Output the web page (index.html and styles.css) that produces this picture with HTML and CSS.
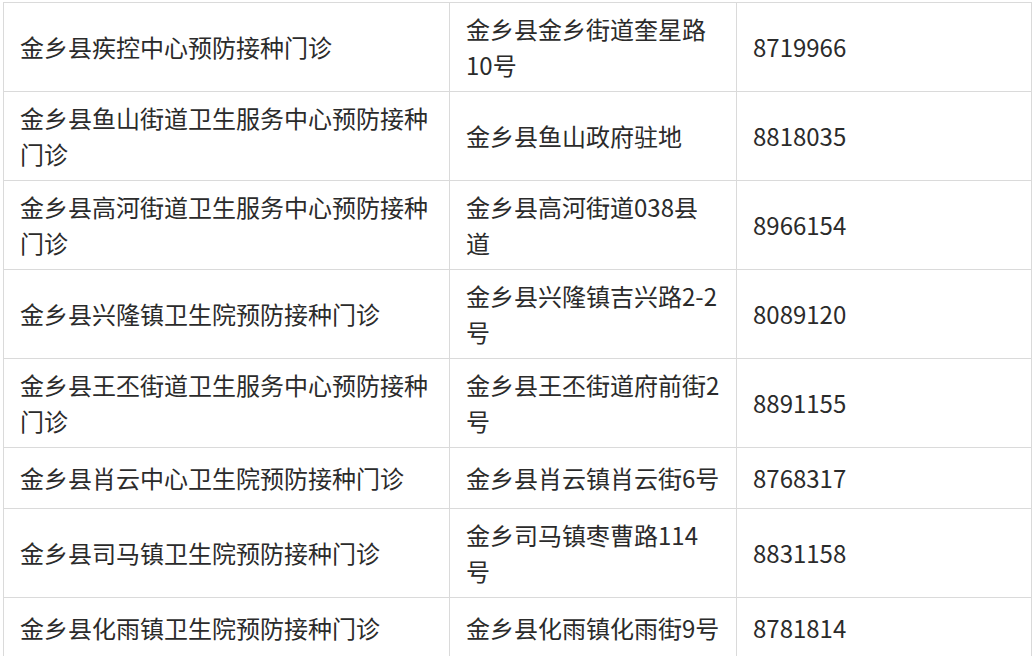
FILE: index.html
```html
<!DOCTYPE html>
<html lang="zh-CN">
<head>
<meta charset="utf-8">
<title>金乡县预防接种门诊</title>
<link rel="stylesheet" href="styles.css">
</head>
<body>
<table class="clinics">
  <colgroup>
    <col class="c-name">
    <col class="c-addr">
    <col class="c-tel">
  </colgroup>
  <tbody>
    <tr class="tall"><td>金乡县疾控中心预防接种门诊</td><td>金乡县金乡街道奎星路10号</td><td>8719966</td></tr>
    <tr class="tall"><td>金乡县鱼山街道卫生服务中心预防接种门诊</td><td>金乡县鱼山政府驻地</td><td>8818035</td></tr>
    <tr class="tall"><td>金乡县高河街道卫生服务中心预防接种门诊</td><td>金乡县高河街道038县道</td><td>8966154</td></tr>
    <tr class="tall"><td>金乡县兴隆镇卫生院预防接种门诊</td><td>金乡县兴隆镇吉兴路2-2号</td><td>8089120</td></tr>
    <tr class="tall"><td>金乡县王丕街道卫生服务中心预防接种门诊</td><td>金乡县王丕街道府前街2号</td><td>8891155</td></tr>
    <tr class="short"><td>金乡县肖云中心卫生院预防接种门诊</td><td>金乡县肖云镇肖云街6号</td><td>8768317</td></tr>
    <tr class="tall"><td>金乡县司马镇卫生院预防接种门诊</td><td>金乡司马镇枣曹路114号</td><td>8831158</td></tr>
    <tr class="short"><td>金乡县化雨镇卫生院预防接种门诊</td><td>金乡县化雨镇化雨街9号</td><td>8781814</td></tr>
  </tbody>
</table>
</body>
</html>
```

FILE: styles.css
```css
html, body {
  margin: 0;
  padding: 0;
  background: #ffffff;
}

body {
  padding: 2px 0 0 3px;
  font-family: "Noto Sans CJK SC", "Noto Sans", sans-serif;
  color: #2b2b2b;
}

.clinics {
  border-collapse: collapse;
  table-layout: fixed;
  width: 1028px;
  font-size: 24px;
  line-height: 36px;
}

.c-name { width: 446px; }
.c-addr { width: 287px; }
.c-tel { width: 295px; }

.clinics td {
  border: 1px solid #dadada;
  padding: 0 16px;
  vertical-align: middle;
  text-align: left;
}

.tall td { height: 88px; }
.short td { height: 60px; }
```
